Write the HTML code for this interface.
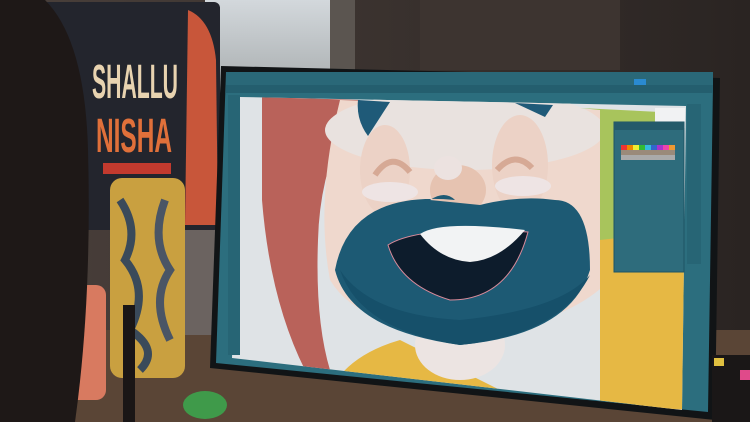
<!DOCTYPE html>
<html><head><style>
html,body{margin:0;padding:0;width:750px;height:422px;overflow:hidden;background:#2e2826}
svg{display:block}
text{font-family:"Liberation Sans",sans-serif}
</style></head><body>
<svg width="750" height="422" viewBox="0 0 750 422" xmlns="http://www.w3.org/2000/svg">
<defs>
<linearGradient id="win" x1="0" y1="0" x2="0" y2="1"><stop offset="0" stop-color="#d3d8dc"/><stop offset="1" stop-color="#a4a9aa"/></linearGradient>
<linearGradient id="wall" x1="0" y1="0" x2="1" y2="0"><stop offset="0" stop-color="#4a403b"/><stop offset="1" stop-color="#2a2422"/></linearGradient>
</defs>
<rect width="750" height="422" fill="url(#wall)"/>
<rect x="205" y="0" width="130" height="100" fill="url(#win)"/>
<rect x="330" y="0" width="25" height="100" fill="#5b5550"/>
<rect x="420" y="0" width="200" height="70" fill="#3d3430"/>
<rect x="0" y="330" width="750" height="92" fill="#5a4536"/>
<rect x="180" y="225" width="60" height="110" fill="#6b6360"/>
<!-- poster -->
<rect x="42" y="2" width="178" height="228" rx="6" fill="#23252d"/>
<path d="M188 10 Q212 20 216 60 L218 225 L185 225 Z" fill="#c8563a"/>
<path d="M42 20 Q60 40 62 80 L60 225 L42 225Z" fill="#b04a38"/>
<text x="92" y="98" font-size="48" font-weight="bold" fill="#e8d3b0" textLength="86" lengthAdjust="spacingAndGlyphs">SHALLU</text>
<text x="96" y="152" font-size="48" font-weight="bold" fill="#e0703a" textLength="76" lengthAdjust="spacingAndGlyphs">NISHA</text>
<rect x="103" y="163" width="68" height="11" fill="#c23a2e"/>
<!-- yellow vase -->
<rect x="110" y="178" width="75" height="200" rx="12" fill="#c9a040"/>
<path d="M120 200 Q140 230 125 260 Q150 290 130 330 Q160 350 140 370" stroke="#3a4a5a" stroke-width="8" fill="none"/>
<path d="M165 200 Q150 240 170 270 Q150 300 170 340" stroke="#4a5565" stroke-width="8" fill="none"/>
<!-- pink vase -->
<rect x="38" y="285" width="68" height="115" rx="10" fill="#d87a60"/>
<!-- hair left -->
<path d="M0 0 L45 0 Q85 40 88 150 Q92 300 75 422 L0 422Z" fill="#1e1817"/>
<rect x="123" y="305" width="12" height="117" fill="#1a1616"/>
<!-- plant -->
<ellipse cx="205" cy="405" rx="22" ry="14" fill="#3f9a4a"/>
<!-- monitor -->
<path d="M221 66 L720 78 L715 420 L210 368 Z" fill="#111416"/>
<path d="M226 72 L713 84 L708 412 L216 363 Z" fill="#2c6e7e"/>
<!-- canvas -->
<clipPath id="cv"><path d="M240 97 L686 106 L682 410 L232 358 Z"/></clipPath>
<g clip-path="url(#cv)">
<rect x="230" y="90" width="460" height="330" fill="#dfe3e6"/>
<path d="M262 97 L360 100 Q320 160 318 240 Q315 320 330 370 L305 370 Q270 300 262 200 Z" fill="#b9625a"/>
<path d="M340 100 L610 110 L610 280 Q560 330 460 330 Q360 330 330 280 Q315 200 340 100Z" fill="#efd8cd"/>
<ellipse cx="465" cy="130" rx="140" ry="40" fill="#e9e2df"/>
<path d="M580 108 L660 112 L655 180 Q620 250 600 250 L600 110Z" fill="#a8c45c"/>
<rect x="655" y="108" width="30" height="20" fill="#f1f2f3"/>
<path d="M600 240 L690 230 L690 410 L520 400 L460 370 L400 340 Q330 360 320 420 L600 420Z" fill="#e6b844"/>
<ellipse cx="460" cy="345" rx="45" ry="35" fill="#ece4e2"/>
<ellipse cx="385" cy="170" rx="25" ry="45" fill="#ecd2c6"/>
<ellipse cx="520" cy="165" rx="28" ry="50" fill="#ecd2c6"/>
<path d="M375 175 Q392 150 410 172" stroke="#d6a995" stroke-width="6" fill="none"/>
<path d="M497 170 Q515 150 532 168" stroke="#d6a995" stroke-width="6" fill="none"/>
<ellipse cx="390" cy="192" rx="28" ry="10" fill="#eee4e4"/>
<ellipse cx="523" cy="186" rx="28" ry="10" fill="#eee4e4"/>
<path d="M358 100 L390 102 L368 136 Q356 120 358 100Z" fill="#1f5a78"/>
<path d="M515 103 L553 105 L545 117 Z" fill="#1f5a78"/>
<ellipse cx="458" cy="190" rx="28" ry="25" fill="#e6c3b1"/>
<ellipse cx="448" cy="168" rx="14" ry="12" fill="#ece2e0"/>
<path d="M430 200 Q445 190 455 200 Q350 190 335 270 Q350 330 460 345 Q570 335 590 270 Q590 200 555 200 Q520 195 480 205 Z" fill="#1d5a74"/>
<path d="M340 270 Q360 330 460 345 Q560 335 590 275 Q560 310 460 320 Q370 315 340 270Z" fill="#16506a"/>
<path d="M388 245 Q420 225 528 232 Q510 300 450 300 Q400 285 388 245Z" fill="#0d1c2c" stroke="#d98a9a" stroke-width="1"/>
<path d="M420 234 Q440 220 525 230 Q500 260 470 262 Q440 260 420 234Z" fill="#f2f3f4"/>
</g>
<!-- panel -->
<rect x="614" y="122" width="70" height="150" fill="#2e6c7c" stroke="#1e5464"/>
<rect x="614" y="122" width="70" height="8" fill="#245a6a"/>
<g>
<rect x="621" y="145" width="6" height="5" fill="#e33"/><rect x="627" y="145" width="6" height="5" fill="#e80"/><rect x="633" y="145" width="6" height="5" fill="#ee3"/><rect x="639" y="145" width="6" height="5" fill="#3b3"/><rect x="645" y="145" width="6" height="5" fill="#3bd"/><rect x="651" y="145" width="6" height="5" fill="#36c"/><rect x="657" y="145" width="6" height="5" fill="#a3c"/><rect x="663" y="145" width="6" height="5" fill="#e4a"/><rect x="669" y="145" width="6" height="5" fill="#e93"/>
<rect x="621" y="150" width="54" height="5" fill="#9a8a7a"/>
<rect x="621" y="155" width="54" height="5" fill="#aaa"/>
</g>
<!-- toolbars -->
<rect x="226" y="72" width="487" height="13" fill="#2a6878"/>
<rect x="226" y="85" width="487" height="8" fill="#245e6e"/>
<rect x="634" y="79" width="12" height="6" fill="#2a8ad0"/>
<rect x="228" y="95" width="12" height="260" fill="#276575"/>
<rect x="687" y="104" width="14" height="160" fill="#276575"/>
<!-- right desk items -->
<rect x="712" y="355" width="38" height="67" fill="#1a1717"/>
<rect x="714" y="358" width="10" height="8" fill="#e0c040"/>
<rect x="740" y="370" width="10" height="10" fill="#e04a8a"/>
</svg>
</body></html>
